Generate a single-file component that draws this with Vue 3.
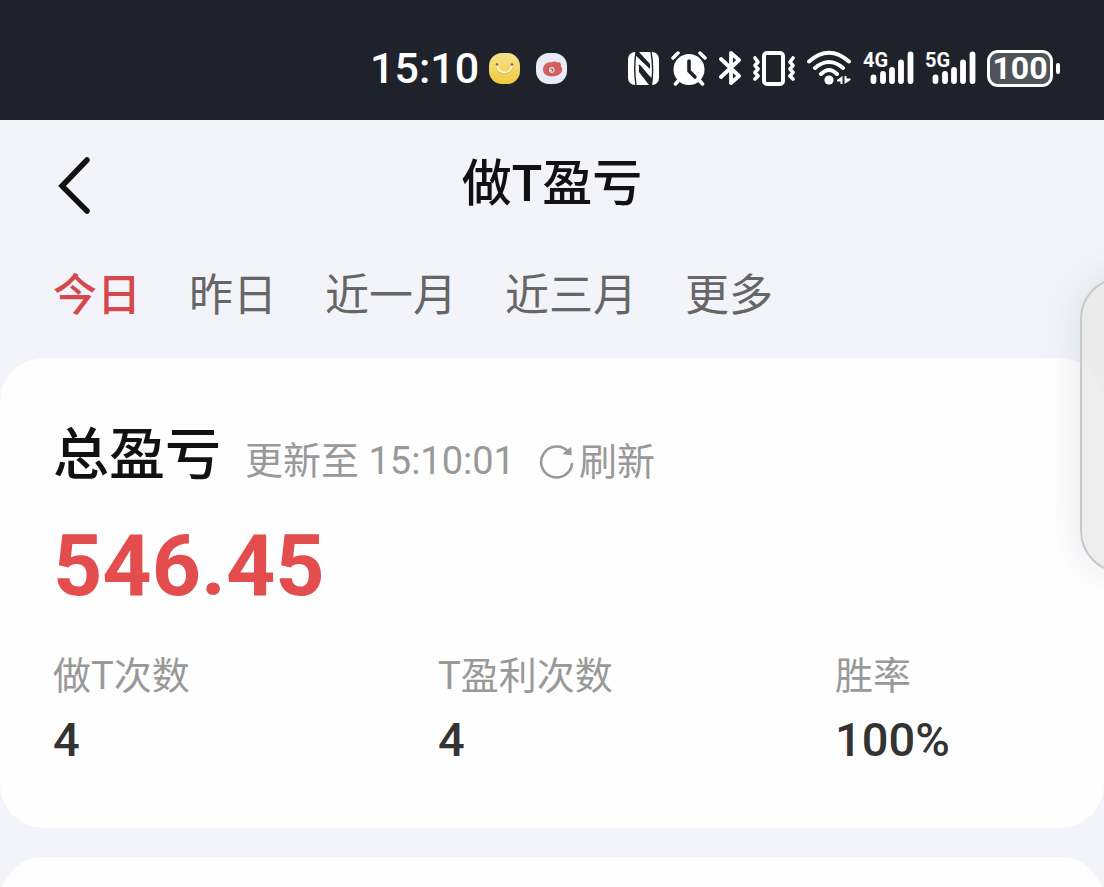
<script setup>
import { ref } from 'vue'

const tabs = ['今日', '昨日', '近一月', '近三月', '更多']
const active = ref('今日')
const stats = [
  { label: '做T次数', value: '4' },
  { label: 'T盈利次数', value: '4' },
  { label: '胜率', value: '100%' },
]
const networks = ['4G', '5G']
</script>

<template>
  <div class="screen">
    <div class="status">
      <div class="status-left">
        <time class="clock">15:10</time>
        <svg class="app-icon" viewBox="0 0 31 31" aria-hidden="true">
          <defs>
            <linearGradient id="gold" x1="0" y1="0" x2="0" y2="1">
              <stop offset="0" stop-color="#f6e48e" />
              <stop offset="1" stop-color="#f0c93c" />
            </linearGradient>
          </defs>
          <rect width="31" height="31" rx="13" fill="url(#gold)" />
          <path d="M8 13C9 23 22 23 23 13" fill="none" stroke="#b99a3c" stroke-width="2" opacity=".5" />
          <path d="M8 12C9 22 22 22 23 12" fill="none" stroke="#fffbe8" stroke-width="1.800" />
          <circle cx="8" cy="11.500" r="1.300" fill="#7d6f3a" />
          <circle cx="23" cy="11.500" r="1.300" fill="#7d6f3a" />
        </svg>
        <svg class="app-icon" viewBox="0 0 31 31" aria-hidden="true">
          <rect width="31" height="31" rx="13" fill="#e9ecf8" />
          <path d="M7 17C7 12 11 8.500 15 9.500C18 8 20 8 21 9.500C24 8.500 25.500 10 24.800 13C28 17 25.500 21 20 23C13 24.500 7 22 7 17Z" fill="#d2605f" />
          <ellipse cx="15.500" cy="17" rx="4" ry="3.200" fill="#b85558" />
          <circle cx="15.800" cy="17" r="2.300" fill="none" stroke="#f3dfe3" stroke-width="1.200" />
          <circle cx="15" cy="17.500" r="1" fill="#f3dfe3" />
        </svg>
      </div>
      <div class="status-right">
        <svg class="nfc" viewBox="0 0 31 33" aria-hidden="true">
          <rect width="31" height="33" rx="7" fill="#fff" />
          <path d="M8 0Q5.500 16 8 33M23 0Q26 16 23.500 33" fill="none" stroke="#1f222b" stroke-width="1.400" />
          <path d="M8 0H11L22 12V17L8 4Z" fill="#1f222b" />
          <path d="M11 12L24 26V33H21L11 20Z" fill="#1f222b" />
          <path d="M8.500 4L22.500 20V26L8.500 10Z" fill="#fff" />
          <path d="M11 13L22 26" fill="none" stroke="#1f222b" stroke-width="1.800" />
        </svg>
        <svg class="alarm" viewBox="0 0 36 35" aria-hidden="true">
          <circle cx="18" cy="18.500" r="15.500" fill="#fff" />
          <path d="M2 7L7 2M34 7L29 2M8 29L4.500 33M28 29L31.500 33" stroke="#fff" stroke-width="3.500" stroke-linecap="round" />
          <path d="M18 10V20L24 26" fill="none" stroke="#1f222b" stroke-width="3.600" stroke-linecap="round" stroke-linejoin="round" />
        </svg>
        <svg class="bluetooth" viewBox="0 0 23 36" aria-hidden="true">
          <path d="M2 9L20 26L12 33V3L20 10L2 27" fill="none" stroke="#fff" stroke-width="3.800" stroke-linecap="round" stroke-linejoin="round" />
        </svg>
        <svg class="vibrate" viewBox="0 0 44 35" aria-hidden="true">
          <rect x="12" y="2" width="19" height="31" rx="3" fill="none" stroke="#fff" stroke-width="4" />
          <path d="M3 7L6 11L3 14.500L6 18L3 21.500L6 25L3 28M41 7L38 11L41 14.500L38 18L41 21.500L38 25L41 28" fill="none" stroke="#fff" stroke-width="3.600" stroke-linecap="round" stroke-linejoin="round" />
        </svg>
        <svg class="wifi" viewBox="0 0 44 36" aria-hidden="true">
          <path d="M2 11.500Q22 -6 42 11.500M8 18Q22 6 36 18M14 24Q22 16 30 24" fill="none" stroke="#fff" stroke-width="4" stroke-linecap="round" />
          <circle cx="22" cy="30" r="4.600" fill="#fff" />
          <path d="M35.500 26V34H33.500V31.500H30V30ZM37.500 26H39.500V28.500H43.500V30L37.500 34Z" fill="#fff" />
        </svg>
        <div v-for="n in networks" :key="n" class="network">
          <svg viewBox="0 0 52 36" aria-hidden="true">
            <path d="M10.500 27.500V31M20 24V31M29 20V31M38 12.500V31M47.500 4.500V31" stroke="#fff" stroke-width="5.800" stroke-linecap="round" />
          </svg>
          <span class="network-name">{{ n }}</span>
        </div>
        <div class="battery"><span class="battery-body">100</span><i class="battery-tip"></i></div>
      </div>
    </div>

    <header class="header">
      <button class="back" aria-label="返回">
        <svg viewBox="0 0 36 60" aria-hidden="true">
          <path d="M31 5L6 31L31 56" fill="none" stroke="#111" stroke-width="5.500" stroke-linecap="round" stroke-linejoin="miter" />
        </svg>
      </button>
      <h1 class="title">做T盈亏</h1>
    </header>

    <nav class="tabs">
      <button v-for="t in tabs" :key="t" class="tab" :class="{ active: t === active }" @click="active = t">{{ t }}</button>
    </nav>

    <main class="cards">
      <section class="card">
        <div class="summary">
          <h2 class="summary-title">总盈亏</h2>
          <span class="updated">更新至 15:10:01</span>
          <button class="refresh">
            <svg viewBox="0 0 36 36" aria-hidden="true">
              <path d="M33 20A15.500 15.500 0 1 1 29.500 8" fill="none" stroke="#999" stroke-width="2.600" stroke-linecap="round" />
              <path d="M25 9.500L32 10.500L31.500 4Z" fill="#999" stroke="#999" stroke-width="1.500" stroke-linejoin="round" />
            </svg>
            <span>刷新</span>
          </button>
        </div>
        <div class="total">546.45</div>
        <dl class="stats">
          <div v-for="s in stats" :key="s.label">
            <dt>{{ s.label }}</dt>
            <dd>{{ s.value }}</dd>
          </div>
        </dl>
      </section>
      <section class="card"></section>
    </main>
    <aside class="side-handle"></aside>
  </div>
</template>

<style>
body {
  background: #f3f4f9;
}
</style>

<style scoped>
.screen {
  position: relative;
  height: 100vh;
  overflow: hidden;
  display: flex;
  flex-direction: column;
  background: #f3f4f9;
  color: #111;
  font-family: Roboto, "Noto Sans CJK SC", sans-serif;
}
button {
  border: 0;
  padding: 0;
  background: none;
  font: inherit;
  color: inherit;
  cursor: pointer;
}
svg {
  display: block;
}
h1, h2, dl, dd {
  margin: 0;
}
.status {
  flex: none;
  height: 120px;
  box-sizing: border-box;
  padding: 16px 44px 0 370px;
  display: flex;
  align-items: center;
  justify-content: space-between;
  background: #1f222b;
  color: #fff;
}
.status-left {
  display: flex;
  align-items: center;
  gap: 16px;
}
.clock {
  margin-right: -6px;
  font-size: 43px;
  font-weight: 500;
  line-height: 52px;
}
.app-icon {
  width: 31px;
  height: 31px;
}
.status-right {
  display: flex;
  align-items: center;
}
.nfc {
  width: 31px;
  height: 33px;
  margin-right: 12px;
}
.alarm {
  width: 36px;
  height: 35px;
  margin-right: 12px;
}
.bluetooth {
  width: 23px;
  height: 36px;
  margin-right: 10px;
}
.vibrate {
  width: 44px;
  height: 35px;
  margin-right: 11px;
}
.wifi {
  width: 44px;
  height: 36px;
  margin-right: 12px;
}
.network {
  position: relative;
  width: 52px;
  margin-right: 10px;
}
.network-name {
  position: absolute;
  left: 0;
  top: 0;
  font-size: 20px;
  font-weight: 700;
  line-height: 20px;
}
.battery {
  display: flex;
  align-items: center;
  gap: 3px;
}
.battery-body {
  box-sizing: border-box;
  width: 66px;
  height: 37px;
  border: 3px solid #fff;
  border-radius: 11px;
  background: #50535a;
  font-size: 32px;
  font-weight: 700;
  line-height: 30px;
  text-align: center;
}
.battery-tip {
  width: 4px;
  height: 11px;
  border-radius: 2px;
  background: #fff;
}
.header {
  position: relative;
  flex: none;
  height: 128px;
  display: flex;
  justify-content: center;
  align-items: center;
}
.back {
  position: absolute;
  left: 56px;
  top: 35px;
}
.back svg {
  width: 36px;
  height: 60px;
}
.title {
  font-size: 50px;
  font-weight: 500;
  line-height: 60px;
}
.tabs {
  flex: none;
  height: 110px;
  box-sizing: border-box;
  padding: 18px 53px 0;
  display: flex;
  align-items: flex-start;
  gap: 48px;
}
.tab {
  font-size: 44px;
  line-height: 60px;
  color: #666;
}
.tab.active {
  color: #d5494d;
  font-weight: 500;
}
.cards {
  flex: 1;
  display: flex;
  flex-direction: column;
  gap: 29px;
}
.card {
  flex: none;
  box-sizing: border-box;
  min-height: 120px;
  padding: 62px 53px 58px;
  border-radius: 44px;
  background: #fefefe;
}
.summary {
  display: flex;
  align-items: baseline;
  color: #999;
}
.summary-title {
  margin-right: 24px;
  font-size: 56px;
  font-weight: 500;
  line-height: 70px;
  color: #111;
}
.updated {
  margin-right: 24px;
  font-size: 38px;
  line-height: 48px;
}
.refresh {
  display: flex;
  align-items: center;
  align-self: flex-end;
  gap: 4px;
  margin-bottom: 4px;
  font-size: 38px;
  line-height: 48px;
}
.refresh svg {
  width: 36px;
  height: 36px;
}
.total {
  margin-top: 20px;
  font-size: 86px;
  font-weight: 700;
  line-height: 112px;
  color: #e34d4e;
}
.stats {
  display: grid;
  grid-template-columns: 385fr 397fr 216fr;
  margin-top: 30px;
}
.stats dt {
  font-size: 38px;
  line-height: 48px;
  color: #999;
}
.stats dd {
  margin-top: 10px;
  font-size: 47px;
  font-weight: 500;
  line-height: 60px;
  color: #333;
}
.side-handle {
  position: absolute;
  right: -60px;
  top: 277px;
  width: 84px;
  height: 296px;
  box-sizing: border-box;
  border: 2px solid #c8c8ca;
  border-radius: 42px;
  background: rgba(232, 232, 232, 0.8);
  box-shadow: 0 0 42px rgba(80, 90, 130, 0.14);
}
</style>
